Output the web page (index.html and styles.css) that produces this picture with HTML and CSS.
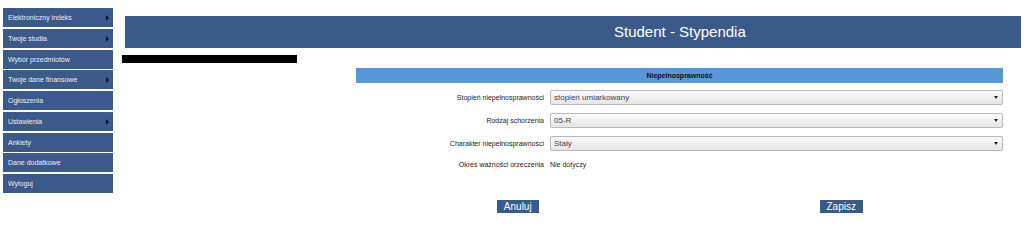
FILE: index.html
```html
<!DOCTYPE html>
<html lang="pl">
<head>
  <meta charset="UTF-8" />
  <title>Student - Stypendia</title>
  <link rel="stylesheet" href="styles.css">
</head>
<body>
  <div class="menu">
    <div class="menu-item has-sub">Elektroniczny indeks</div>
    <div class="menu-item has-sub">Twoje studia</div>
    <div class="menu-item">Wybór przedmiotów</div>
    <div class="menu-item has-sub">Twoje dane finansowe</div>
    <div class="menu-item">Ogłoszenia</div>
    <div class="menu-item has-sub">Ustawienia</div>
    <div class="menu-item">Ankiety</div>
    <div class="menu-item">Dane dodatkowe</div>
    <div class="menu-item">Wyloguj</div>
  </div>

  <div class="main">
    <div class="title-bar"><span>Student - Stypendia</span></div>
    <div class="redacted"></div>

    <div class="form">
      <div class="section-head">Niepełnosprawność</div>
      <div class="row">
        <div class="label">Stopień niepełnosprawności</div>
        <div class="select">stopień umiarkowany</div>
      </div>
      <div class="row">
        <div class="label">Rodzaj schorzenia</div>
        <div class="select">05-R</div>
      </div>
      <div class="row">
        <div class="label">Charakter niepełnosprawności</div>
        <div class="select">Stały</div>
      </div>
      <div class="row text-row">
        <div class="label">Okres ważności orzeczenia</div>
        <div class="value">Nie dotyczy</div>
      </div>
      <div class="buttons">
        <div class="cell"><button>Anuluj</button></div>
        <div class="cell"><button>Zapisz</button></div>
      </div>
    </div>
  </div>
</body>
</html>
```

FILE: styles.css
```css
body {
  margin: 0;
  background: #ffffff;
  font-family: "Liberation Sans", Arial, sans-serif;
  display: flex;
  align-items: flex-start;
}
.menu {
  width: 110px;
  padding: 8px 0 0 3px;
  display: flex;
  flex-direction: column;
  gap: 1.75px;
}
.menu-item {
  position: relative;
  height: 19px;
  line-height: 19px;
  padding-left: 5px;
  background: #3b5a8b;
  color: #e8eef6;
  font-size: 7px;
}
.has-sub::after {
  content: "";
  position: absolute;
  right: 4px;
  top: 7px;
  border-left: 3px solid #111;
  border-top: 3px solid transparent;
  border-bottom: 3px solid transparent;
}
.main {
  flex: 1;
  margin: 16px 3px 0 12px;
}
.title-bar {
  height: 32px;
  background: #3a5a8a;
  color: #ffffff;
  font-size: 15px;
  line-height: 32px;
  padding-left: 489px;
}
.redacted {
  width: 175px;
  height: 8px;
  margin: 7px 0 0 -3px;
  background: #000;
}
.form {
  width: 647px;
  margin: 5px 0 0 231px;
}
.section-head {
  height: 15px;
  line-height: 15px;
  background: #5896d6;
  text-align: center;
  font-size: 7px;
  font-weight: bold;
  color: #111;
}
.row {
  display: flex;
  align-items: center;
  gap: 6px;
  margin-top: 6px;
  height: 16px;
}
.row + .row {
  margin-top: 7px;
}
.label {
  width: 188px;
  text-align: right;
  font-size: 7px;
  color: #222;
}
.select {
  position: relative;
  flex: 1;
  height: 13px;
  line-height: 13px;
  padding-left: 3px;
  border: 1px solid #b9b9b9;
  border-radius: 2px;
  background: linear-gradient(#fafafa, #e6e6e6);
  font-size: 8px;
  color: #444;
}
.select::after {
  content: "";
  position: absolute;
  right: 4px;
  top: 5px;
  border-top: 3px solid #222;
  border-left: 2px solid transparent;
  border-right: 2px solid transparent;
}
.text-row {
  height: 12px;
}
.value {
  font-size: 7px;
  color: #222;
}
.buttons {
  display: flex;
  margin-top: 26px;
}
.cell {
  flex: 1;
  text-align: center;
}
button {
  height: 13px;
  padding: 0 7px;
  border: none;
  background: #3a5a8a;
  color: #ffffff;
  font-family: "Liberation Sans", Arial, sans-serif;
  font-size: 10px;
  line-height: 13px;
}
```
